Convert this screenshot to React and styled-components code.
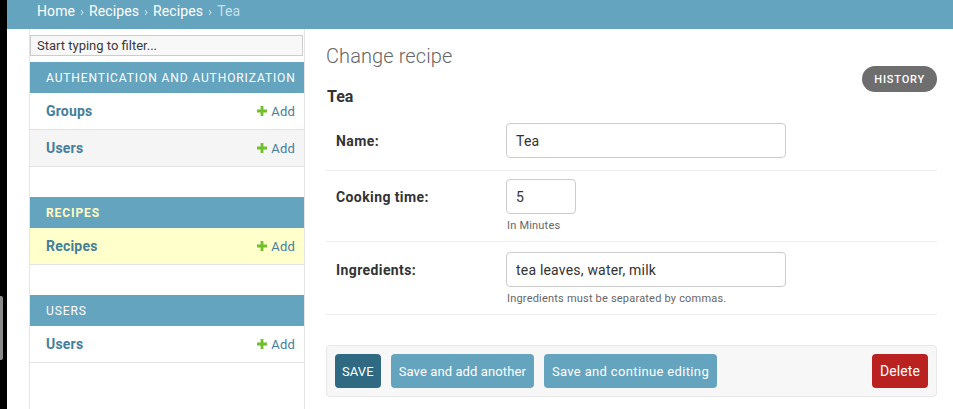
import React from 'react';
import styled, { createGlobalStyle } from 'styled-components';

const Global = createGlobalStyle`
  html, body {
    margin: 0;
    padding: 0;
    background: #fff;
    font-family: Roboto, "Liberation Sans", Arial, sans-serif;
    color: #333;
  }
  * { box-sizing: border-box; }
`;

const Page = styled.div`
  display: flex;
  width: 953px;
  height: 409px;
  overflow: hidden;
`;

const Edge = styled.div`
  width: 7px;
  flex: none;
  background: #000;
  display: flex;
  flex-direction: column;
  padding-top: 296px;
`;

const Thumb = styled.div`
  width: 3px;
  height: 64px;
  background: #8a8a8a;
  border-radius: 0 2px 2px 0;
`;

const Window = styled.div`
  flex: 1;
  display: flex;
  flex-direction: column;
`;

const Crumbs = styled.div`
  height: 29px;
  flex: none;
  background: #65a4bf;
  padding: 3px 0 0 30px;
  font-size: 14px;
  line-height: 17px;
  letter-spacing: 0.1px;
  color: #fff;
  a { color: #fff; text-decoration: none; }
  span.sep { color: #d4e6ef; margin: 0 5px; font-size: 13px; }
  span.current { color: #c8e0ea; }
`;

const Body = styled.div`
  flex: 1;
  display: flex;
  padding-left: 22px;
`;

const Sidebar = styled.nav`
  width: 276px;
  flex: none;
  border-left: 1px solid #e4e4e4;
  border-right: 1px solid #e4e4e4;
  padding-top: 6px;
  display: flex;
  flex-direction: column;
`;

const Filter = styled.input`
  height: 21px;
  width: 273px;
  margin: 0 0 6px 0;
  border: 1px solid #ccc;
  background: #f8f8f8;
  padding: 0 6px;
  font: 13px Roboto, "Liberation Sans", sans-serif;
  color: #333;
  &::placeholder { color: #3a3a3a; }
  &:focus { outline: none; }
`;

const Module = styled.div`
  margin-bottom: 30px;
`;

const Caption = styled.div`
  height: 31px;
  background: #65a4bf;
  padding-left: 16px;
  display: flex;
  align-items: center;
  font-size: 12px;
  letter-spacing: 0.9px;
  text-transform: uppercase;
  color: ${p => (p.$current ? '#ffffc4' : '#fff')};
  font-weight: ${p => (p.$current ? 700 : 400)};
`;

const ModelRow = styled.div`
  height: 37px;
  display: flex;
  align-items: center;
  justify-content: space-between;
  padding: 0 9px 0 16px;
  border-bottom: 1px solid #e4e4e4;
  background: ${p => p.$bg || '#fff'};
`;

const ModelName = styled.a`
  font-size: 14px;
  font-weight: 700;
  letter-spacing: 0.2px;
  color: #447e9b;
  text-decoration: none;
`;

const AddLink = styled.a`
  display: flex;
  align-items: center;
  gap: 4px;
  font-size: 13px;
  letter-spacing: 0.2px;
  color: #447e9b;
  text-decoration: none;
`;

const Main = styled.main`
  flex: 1;
  padding: 14px 16px 0 21px;
  display: flex;
  flex-direction: column;
`;

const Title = styled.h1`
  margin: 0;
  font-size: 20px;
  line-height: 26px;
  font-weight: 300;
  letter-spacing: 0.1px;
  color: #666;
`;

const Tools = styled.div`
  display: flex;
  justify-content: flex-end;
  margin-top: -3px;
`;

const HistoryBtn = styled.a`
  height: 26px;
  padding: 0 12px;
  border-radius: 13px;
  background: #6e6e6e;
  color: #fff;
  font-size: 11px;
  font-weight: 500;
  letter-spacing: 0.8px;
  display: flex;
  align-items: center;
`;

const ObjName = styled.h2`
  margin: -3px 0 0 1px;
  font-size: 16px;
  line-height: 16px;
  font-weight: 700;
  color: #333;
`;

const Fieldset = styled.div`
  margin-top: 8px;
  display: flex;
  flex-direction: column;
`;

const FormRow = styled.div`
  display: flex;
  padding: ${p => p.$pad};
  border-bottom: 1px solid #eee;
`;

const Label = styled.label`
  width: 170px;
  flex: none;
  height: 35px;
  display: flex;
  align-items: center;
  font-size: 14px;
  font-weight: 700;
  letter-spacing: 0.4px;
  color: #333;
`;

const Field = styled.div`
  display: flex;
  flex-direction: column;
`;

const TextInput = styled.input`
  height: 35px;
  width: ${p => p.$w}px;
  border: 1px solid #ccc;
  border-radius: 4px;
  padding: 0 9px;
  font: 14px Roboto, "Liberation Sans", sans-serif;
  letter-spacing: 0.2px;
  color: #333;
  background: #fff;
  &:focus { outline: none; }
`;

const Help = styled.div`
  margin: 5px 0 0 1px;
  font-size: 11px;
  line-height: 13px;
  letter-spacing: 0.2px;
  color: #666;
`;

const SubmitRow = styled.div`
  margin-top: 30px;
  height: 52px;
  padding: 0 8px;
  display: flex;
  align-items: center;
  gap: 10px;
  background: #f7f7f7;
  border: 1px solid #e8e8e8;
  border-radius: 4px;
`;

const Button = styled.button`
  height: 34px;
  padding: 0 ${p => p.$px || 8}px;
  border: none;
  border-radius: 4px;
  background: ${p => p.$bg};
  color: #fff;
  font: ${p => p.$size || 13}px Roboto, "Liberation Sans", sans-serif;
  letter-spacing: ${p => p.$ls || 0.1}px;
  text-transform: ${p => (p.$upper ? 'uppercase' : 'none')};
  margin-left: ${p => (p.$push ? 'auto' : '0')};
`;

const Plus = () => (
  <svg width="10" height="10" viewBox="0 0 10 10">
    <path d="M3.6 0h2.8v3.6H10v2.8H6.4V10H3.6V6.4H0V3.6h3.6z" fill="#70bf2b" />
  </svg>
);

const modules = [
  { name: 'Authentication and Authorization', models: ['Groups', 'Users'] },
  { name: 'Recipes', current: true, models: ['Recipes'] },
  { name: 'Users', models: ['Users'] },
];

export default function App() {
  return (
    <Page>
      <Global />
      <Edge><Thumb /></Edge>
      <Window>
        <Crumbs>
          <a href="#">Home</a><span className="sep">›</span>
          <a href="#">Recipes</a><span className="sep">›</span>
          <a href="#">Recipes</a><span className="sep">›</span>
          <span className="current">Tea</span>
        </Crumbs>
        <Body>
          <Sidebar>
            <Filter placeholder="Start typing to filter..." />
            {modules.map(m => (
              <Module key={m.name + m.models.length}>
                <Caption $current={m.current}>{m.name}</Caption>
                {m.models.map((model, i) => (
                  <ModelRow
                    key={model}
                    $bg={m.current ? '#ffffcc' : i % 2 === 1 ? '#f5f5f5' : '#fff'}
                  >
                    <ModelName href="#">{model}</ModelName>
                    <AddLink href="#"><Plus />Add</AddLink>
                  </ModelRow>
                ))}
              </Module>
            ))}
          </Sidebar>
          <Main>
            <Title>Change recipe</Title>
            <Tools><HistoryBtn>HISTORY</HistoryBtn></Tools>
            <ObjName>Tea</ObjName>
            <Fieldset>
              <FormRow $pad="10px 10px 12px">
                <Label>Name:</Label>
                <Field><TextInput $w={280} defaultValue="Tea" /></Field>
              </FormRow>
              <FormRow $pad="8px 10px 9px">
                <Label>Cooking time:</Label>
                <Field>
                  <TextInput $w={70} defaultValue="5" />
                  <Help>In Minutes</Help>
                </Field>
              </FormRow>
              <FormRow $pad="10px 10px 9px">
                <Label>Ingredients:</Label>
                <Field>
                  <TextInput $w={280} defaultValue="tea leaves, water, milk" />
                  <Help>Ingredients must be separated by commas.</Help>
                </Field>
              </FormRow>
            </Fieldset>
            <SubmitRow>
              <Button $bg="#2f6a82" $upper $px={7}>Save</Button>
              <Button $bg="#65a4bf">Save and add another</Button>
              <Button $bg="#65a4bf" $ls={0.35}>Save and continue editing</Button>
              <Button $bg="#ba2121" $size={14} $px={8} $push>Delete</Button>
            </SubmitRow>
          </Main>
        </Body>
      </Window>
    </Page>
  );
}
